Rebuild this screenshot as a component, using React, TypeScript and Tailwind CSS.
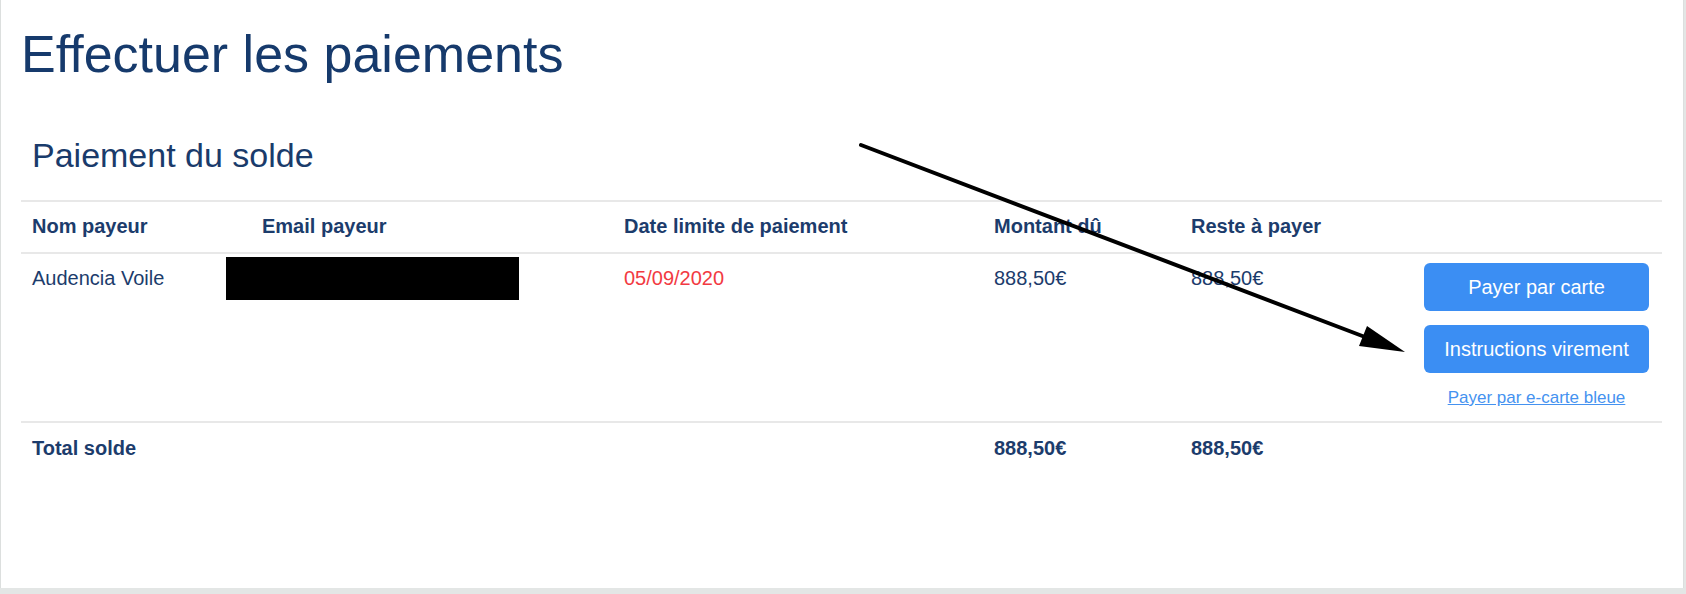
import React from "react";

const navy = "text-[#1c3c6c]";

export default function App() {
  return (
    <div className="w-[1686px] h-[594px] bg-[#e3e6e5] font-['Liberation_Sans',Arial,sans-serif]">
      <div className="relative w-[1684px] h-[588px] bg-white border-l border-r border-[#dcdfde] pl-[20px] pt-[28px]">
        <h1 className="text-[52px] leading-none font-normal text-[#163a6c]">Effectuer les paiements</h1>
        <h2 className="mt-[58px] pl-[11px] text-[34px] leading-none font-normal text-[#1a3b6b]">Paiement du solde</h2>
        <table className={`mt-[28px] w-[1641px] table-fixed border-collapse text-[20px] leading-[24px] ${navy}`}>
          <colgroup>
            <col className="w-[230px]" />
            <col className="w-[362px]" />
            <col className="w-[370px]" />
            <col className="w-[197px]" />
            <col className="w-[233px]" />
            <col className="w-[249px]" />
          </colgroup>
          <thead>
            <tr className="border-t-2 border-[#e8e8e8] font-bold text-left">
              <th className="pl-[11px] pt-[12px] pb-[14px] text-left font-bold">Nom payeur</th>
              <th className="pl-[11px] pt-[12px] pb-[14px] text-left font-bold">Email payeur</th>
              <th className="pl-[11px] pt-[12px] pb-[14px] text-left font-bold">Date limite de paiement</th>
              <th className="pl-[11px] pt-[12px] pb-[14px] text-left font-bold">Montant dû</th>
              <th className="pl-[11px] pt-[12px] pb-[14px] text-left font-bold">Reste à payer</th>
              <th className="pl-[11px] pt-[12px] pb-[14px]"></th>
            </tr>
          </thead>
          <tbody>
            <tr className="border-t-2 border-[#e8e8e8] align-top">
              <td className="pl-[11px] pt-[12px]">Audencia Voile</td>
              <td className="relative pl-[11px] pt-[12px]">
                <span className="opacity-0">email</span>
                <div className="absolute left-[-25px] top-[3px] w-[293px] h-[43px] bg-black" />
              </td>
              <td className="pl-[11px] pt-[12px] text-[#f23a42]">05/09/2020</td>
              <td className="pl-[11px] pt-[12px]">888,50€</td>
              <td className="pl-[11px] pt-[12px]">888,50€</td>
              <td className="pl-[11px] pr-[13px] pt-[9px] pb-[13px]">
                <div className="flex flex-col items-center">
                  <button className="w-[225px] h-[48px] rounded-[6px] bg-[#3b8ef3] text-white text-[20px]">Payer par carte</button>
                  <button className="mt-[14px] w-[225px] h-[48px] rounded-[6px] bg-[#3b8ef3] text-white text-[20px]">Instructions virement</button>
                  <a className="mt-[15px] text-[17px] leading-[20px] text-[#4592f0] underline" href="#">Payer par e-carte bleue</a>
                </div>
              </td>
            </tr>
            <tr className="border-t-2 border-[#e8e8e8] font-bold align-top">
              <td className="pl-[11px] pt-[13px]">Total solde</td>
              <td className="pl-[11px] pt-[13px]"></td>
              <td className="pl-[11px] pt-[13px]"></td>
              <td className="pl-[11px] pt-[13px]">888,50€</td>
              <td className="pl-[11px] pt-[13px]">888,50€</td>
              <td className="pl-[11px] pt-[13px]"></td>
            </tr>
          </tbody>
        </table>
        <svg className="absolute left-0 top-0 pointer-events-none" width="1684" height="588" viewBox="0 0 1684 588">
          <line x1="860" y1="145" x2="1364" y2="337" stroke="#000" strokeWidth="4" strokeLinecap="round" />
          <polygon points="1404,352 1358,346 1366,326" fill="#000" />
        </svg>
      </div>
    </div>
  );
}
